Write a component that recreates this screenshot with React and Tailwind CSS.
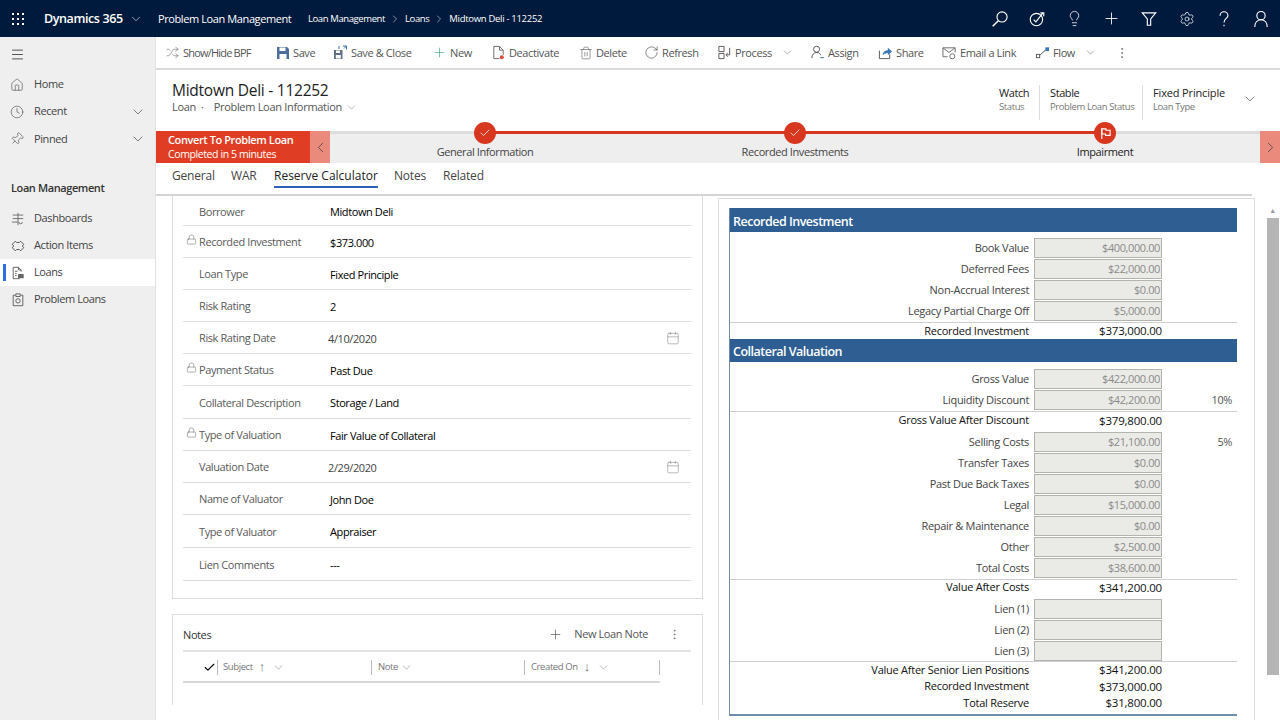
import {
  ChevronDown,
  ChevronLeft,
  ChevronRight,
  Check,
  Clock,
  Home,
  Lightbulb,
  Lock,
  Menu,
  MoreVertical,
  Pin,
  Plus,
  Settings,
  Shuffle,
  RotateCw,
  Trash2,
  Calendar,
} from "lucide-react";

const Svg = ({ size = 16, className = "", children }) => (
  <svg width={size} height={size} viewBox="0 0 16 16" fill="none" stroke="currentColor" strokeWidth="1" className={className}>
    {children}
  </svg>
);

const Waffle = () => (
  <svg width="14" height="14" viewBox="0 0 14 14" fill="currentColor">
    {[2, 7, 12].map((y) => [2, 7, 12].map((x) => <rect key={`${x}-${y}`} x={x - 1} y={y - 1} width="2" height="2" />))}
  </svg>
);

const SearchIcon = () => (
  <Svg size={18}>
    <circle cx="9.800" cy="6.200" r="4.500" />
    <path d="M6.500 9.500L1.500 14.500" strokeWidth="1.300" />
  </Svg>
);
const GoalIcon = () => (
  <Svg size={18}>
    <circle cx="7.500" cy="8.500" r="5.500" />
    <path d="M5 8.500l2 2 6-7.500M11 2.500h3v3" />
  </Svg>
);
const FunnelIcon = () => (
  <Svg size={18}>
    <path d="M2 2.500h12L9.500 8v5.500h-3V8z" />
  </Svg>
);
const HelpIcon = () => (
  <Svg size={18}>
    <path d="M4.500 5a3.500 3.500 0 117 0c0 2.500-3.500 2.500-3.500 6" />
    <path d="M8 13.200v1.300" />
  </Svg>
);
const UserIcon = ({ size = 18 }) => (
  <Svg size={size}>
    <circle cx="8" cy="5" r="3.700" />
    <path d="M2.500 15c0-3.500 2-6.300 5.500-6.300s5.500 2.800 5.500 6.300" />
  </Svg>
);
const FlagIcon = () => (
  <svg width="13" height="13" viewBox="0 0 14 14" fill="none">
    <path d="M3 13V1.500" stroke="#fff" strokeWidth="1.200" />
    <path d="M3 2h4.500v1.500H12V9H7V7.500H3z" stroke="#fff" strokeWidth="1.200" />
  </svg>
);
const SaveIcon = () => (
  <svg width="14" height="14" viewBox="0 0 14 14">
    <path d="M1 1h10l2 2v10H1z" fill="#4d6d9a" />
    <rect x="3.500" y="1.500" width="6" height="3.500" fill="#fff" />
    <rect x="3.500" y="8" width="7" height="5" fill="#fff" />
  </svg>
);
const SaveCloseIcon = () => (
  <svg width="15" height="15" viewBox="0 0 15 15">
    <path d="M1 5h8.500v9H1z" fill="#5f6f86" />
    <rect x="3" y="5.500" width="4" height="2.500" fill="#fff" />
    <rect x="2.800" y="10" width="5" height="3.500" fill="#fff" />
    <path d="M6 1v3M10 1h3.500v3.500M11 3.500l2.500-2.500" stroke="#3b6ea8" fill="none" />
  </svg>
);
const DeactivateIcon = () => (
  <Svg size={15} className="text-[#666]">
    <path d="M3 14.500V1.500h6l4 4v5M9 1.500v4h4M3 14.500h6" />
    <circle cx="11.500" cy="13" r="2.200" fill="#d9503f" stroke="none" />
  </Svg>
);
const ProcessIcon = () => (
  <Svg size={15} className="text-[#555]">
    <path d="M2 1.500h5.500v5.500H2zM2 9h5.500v5.500H2zM13.500 3v7.500H10M11.500 8.500l-2 2 2 2" />
  </Svg>
);
const AssignIcon = () => (
  <Svg size={15} className="text-[#555]">
    <circle cx="7" cy="4.500" r="3.200" />
    <path d="M2 14c0-3.500 2-6 5-6s4 1.500 4.500 3" />
    <path d="M11 13.500h4" stroke="#3b6ea8" />
  </Svg>
);
const ShareIcon = () => (
  <svg width="15" height="15" viewBox="0 0 16 16" fill="none">
    <path d="M1.500 6v8.500h11V10" stroke="#555" />
    <path d="M5 11c0-4 3-5.500 5.500-5.500V3L15 7l-4.500 4V8.500C8 8.500 6 9.500 5 11z" fill="#3b78b8" />
  </svg>
);
const EmailIcon = () => (
  <Svg size={15} className="text-[#666]">
    <path d="M6 12.500H1V3h13v5M1 3l6.500 5L14 3" />
    <circle cx="11" cy="12" r="2.700" />
  </Svg>
);
const FlowIcon = () => (
  <svg width="15" height="15" viewBox="0 0 16 16" fill="none">
    <rect x="1.500" y="10" width="3.500" height="3.500" stroke="#555" />
    <path d="M5 11L11 5.500" stroke="#555" />
    <rect x="11" y="2.500" width="4" height="4" fill="#3b78b8" />
  </svg>
);
const DashIcon = () => (
  <Svg size={14} className="text-[#666]">
    <path d="M8 1v14M2 3.500h12M2 7.500h12M1 11.500h7M9 11.500a2 2 0 004 0" />
  </Svg>
);
const PuzzleIcon = () => (
  <Svg size={14} className="text-[#444]">
    <path d="M5 2.500l1.500 1.500h3L11 2.500 14.500 6 13 8l1.500 2-3.500 3.500L9.500 12h-3L5 13.500 1.500 10 3 8 1.500 6z" />
  </Svg>
);
const LoanIcon = () => (
  <Svg size={14} className="text-[#555]">
    <path d="M10 14.500H2.500v-13h6l3 3v2M8.500 1.500v3h3M4.500 6h3M4.500 8.500h2M4.500 11h2" />
    <rect x="8" y="9" width="6.500" height="5" rx="1" fill="#666" stroke="none" />
  </Svg>
);
const ClipIcon = () => (
  <Svg size={14} className="text-[#555]">
    <path d="M5 2.500H2.500v12h11v-12H11M5.500 1h5v3h-5z" />
    <circle cx="8" cy="9" r="2.500" />
  </Svg>
);

const tools = [
  { icon: <Shuffle size={13} strokeWidth={1} className="text-[#555]" />, label: "Show/Hide BPF", w: "w-[110px]", track: "tracking-[-0.8px]" },
  { icon: <SaveIcon />, label: "Save", w: "w-[58px]" },
  { icon: <SaveCloseIcon />, label: "Save & Close", w: "w-[99px]" },
  { icon: <Plus size={15} strokeWidth={1} className="text-[#2f9e6e]" />, label: "New", w: "w-[59px]" },
  { icon: <DeactivateIcon />, label: "Deactivate", w: "w-[87px]" },
  { icon: <Trash2 size={14} strokeWidth={1} className="text-[#555]" />, label: "Delete", w: "w-[66px]" },
  { icon: <RotateCw size={15} strokeWidth={1} className="text-[#444]" />, label: "Refresh", w: "w-[73px]" },
  { icon: <ProcessIcon />, label: "Process", w: "w-[93px]", caret: true },
  { icon: <AssignIcon />, label: "Assign", w: "w-[68px]" },
  { icon: <ShareIcon />, label: "Share", w: "w-[64px]" },
  { icon: <EmailIcon />, label: "Email a Link", w: "w-[93px]" },
  { icon: <FlowIcon />, label: "Flow", w: "w-[80px]", caret: true },
];

const fields = [
  { label: "Borrower", value: "Midtown Deli", h: "h-[29px]" },
  { label: "Recorded Investment", value: "$373.000", lock: true, h: "h-[32px]" },
  { label: "Loan Type", value: "Fixed Principle", h: "h-[32px]" },
  { label: "Risk Rating", value: "2", h: "h-[32px]" },
  { label: "Risk Rating Date", value: "4/10/2020", date: true, h: "h-[32px]" },
  { label: "Payment Status", value: "Past Due", lock: true, h: "h-[32px]" },
  { label: "Collateral Description", value: "Storage / Land", h: "h-[33px]" },
  { label: "Type of Valuation", value: "Fair Value of Collateral", lock: true, h: "h-[32px]" },
  { label: "Valuation Date", value: "2/29/2020", date: true, h: "h-[32px]" },
  { label: "Name of Valuator", value: "John Doe", h: "h-[32px]" },
  { label: "Type of Valuator", value: "Appraiser", h: "h-[33px]" },
  { label: "Lien Comments", value: "---", h: "h-[33px]" },
];

function Field({ f }) {
  return (
    <div className={`${f.h} flex items-center border-b border-[#dcdcdc] relative`}>
      {f.lock && <Lock size={11} strokeWidth={1} className="absolute left-[3px] top-[8px] text-[#555]" />}
      <div className="w-[147px] pl-[16px] mt-[2px] text-[#5a5a5a]">{f.label}</div>
      <div className={f.date ? "flex-1 mt-[3px] text-[#444] -ml-[2px]" : "flex-1 mt-[3px] text-black"}>{f.value}</div>
      {f.date && <Calendar size={14} strokeWidth={1} className="mr-[11px] text-[#888]" />}
    </div>
  );
}

function InputRow({ label, value, pct }) {
  return (
    <div className="h-[21px] flex items-start">
      <div className="w-[299px] text-right text-[#444] leading-[20px] tracking-[-0.3px]">{label}</div>
      <div className="ml-[5px] w-[128px] h-[20px] bg-[#eaeae6] border border-[#b4b4ae] text-right pr-[1px] text-[#8a8a8a] leading-[18px]">
        {value}
      </div>
      {pct && <div className="w-[70px] text-right text-[#555] leading-[20px]">{pct}</div>}
    </div>
  );
}

function SumRow({ label, value, h = "h-[17px]" }) {
  return (
    <div className={`${h} flex items-center text-[#111] font-medium`}>
      <div className="w-[299px] text-right tracking-[-0.25px]">{label}</div>
      <div className="ml-[5px] w-[128px] text-right text-[11.5px] tracking-[-0.2px]">{value}</div>
    </div>
  );
}

const Band = ({ title, h }) => (
  <div className={`${h} bg-[#2f5f92] text-white font-semibold text-[12.5px] tracking-[-0.5px] pl-[3px] pt-[4px] flex items-center`}>{title}</div>
);

export default function App() {
  return (
    <div className="w-[1280px] h-[720px] overflow-hidden flex flex-col bg-white text-[11px] text-[#333] font-['Open_Sans','Noto_Sans',sans-serif] tracking-[-0.4px]">
      {/* top bar */}
      <div className="h-[37px] bg-[#001a3d] text-white flex items-center shrink-0">
        <div className="w-[36px] flex justify-center"><Waffle /></div>
        <span className="ml-[8px] mt-[2px] w-[80px] text-[12.5px] font-semibold whitespace-nowrap">Dynamics 365</span>
        <ChevronDown size={14} strokeWidth={1} className="ml-[5px]" />
        <span className="ml-[15px] mt-[2px] w-[136px] whitespace-nowrap">Problem Loan Management</span>
        <span className="ml-[14px] mt-[2px] text-[9.5px] whitespace-nowrap">Loan Management</span>
        <ChevronRight size={12} strokeWidth={1} className="mx-[4px]" />
        <span className="mt-[2px] text-[9.5px]">Loans</span>
        <ChevronRight size={12} strokeWidth={1} className="mx-[4px]" />
        <span className="mt-[2px] text-[9.5px] tracking-[-0.3px] whitespace-nowrap">Midtown Deli - 112252</span>
        <div className="ml-auto flex items-center">
          <div className="w-[37.400px] flex justify-center"><SearchIcon /></div>
          <div className="w-[37.400px] flex justify-center"><GoalIcon /></div>
          <div className="w-[37.400px] flex justify-center"><Lightbulb size={17} strokeWidth={1.1} /></div>
          <div className="w-[37.400px] flex justify-center"><Plus size={19} strokeWidth={1.1} /></div>
          <div className="w-[37.400px] flex justify-center"><FunnelIcon /></div>
          <div className="w-[37.400px] flex justify-center"><Settings size={16} strokeWidth={1.1} /></div>
          <div className="w-[37.400px] flex justify-center"><HelpIcon /></div>
          <div className="w-[37.400px] flex justify-center"><UserIcon /></div>
        </div>
      </div>

      <div className="flex-1 flex min-h-0">
        {/* sidebar */}
        <div className="w-[156px] shrink-0 bg-[#efefef] border-r border-[#e2e2e2] text-[#444]">
          <div className="h-[34px] pl-[10px] flex items-center"><Menu size={15} strokeWidth={1.2} className="text-[#222]" /></div>
          <div className="h-[27px] flex items-center pl-[10px]"><Home size={14} strokeWidth={1} /><span className="ml-[10px]">Home</span></div>
          <div className="h-[27px] flex items-center pl-[10px]"><Clock size={14} strokeWidth={1} /><span className="ml-[10px]">Recent</span><ChevronDown size={16} strokeWidth={1} className="ml-auto mr-[9px]" /></div>
          <div className="h-[28px] flex items-center pl-[10px]"><Pin size={14} strokeWidth={1} className="rotate-45" /><span className="ml-[10px]">Pinned</span><ChevronDown size={16} strokeWidth={1} className="ml-auto mr-[9px]" /></div>
          <div className="mt-[21px] h-[28px] pl-[11px] flex items-center font-semibold text-[#333]">Loan Management</div>
          <div className="mt-[3px] h-[27px] flex items-center pl-[11px]"><DashIcon /><span className="ml-[9px]">Dashboards</span></div>
          <div className="h-[27px] flex items-center pl-[11px]"><PuzzleIcon /><span className="ml-[9px]">Action Items</span></div>
          <div className="relative h-[27px] flex items-center pl-[11px] bg-white">
            <div className="absolute left-[3px] top-[5px] w-[3px] h-[17px] bg-[#2b6fe0]" />
            <LoanIcon /><span className="ml-[9px]">Loans</span>
          </div>
          <div className="h-[27px] flex items-center pl-[11px]"><ClipIcon /><span className="ml-[9px]">Problem Loans</span></div>
        </div>

        <div className="flex-1 flex flex-col min-w-0">
          {/* command bar */}
          <div className="h-[33px] shrink-0 border-b-2 border-[#dadada] flex items-center pl-[9px] text-[#555]">
            {tools.map((t) => (
              <div key={t.label} className={`${t.w} flex items-center whitespace-nowrap`}>
                <div className="w-[15px] flex justify-center shrink-0">{t.icon}</div>
                <span className={`ml-[3px] mt-[1px] ${t.track || ""}`}>{t.label}</span>
                {t.caret && <ChevronDown size={13} strokeWidth={1} className="ml-[9px] text-[#666]" />}
              </div>
            ))}
            <MoreVertical size={14} strokeWidth={1.2} className="text-[#666]" />
          </div>

          {/* record title */}
          <div className="h-[61px] shrink-0 flex pl-[16px] pr-[22px]">
            <div>
              <div className="mt-[9px] text-[15.5px] leading-[22px] font-medium text-[#222] tracking-[-0.25px]">Midtown Deli - 112252</div>
              <div className="flex items-center text-[#555] -mt-[2px] tracking-[-0.3px]">
                Loan<span className="mx-[5px]">·</span><span className="ml-[5px]">Problem Loan Information</span>
                <ChevronDown size={13} strokeWidth={1} className="ml-[3px] text-[#888]" />
              </div>
            </div>
            <div className="ml-auto mt-[15px] flex h-[35px] leading-[13px]">
              <div className="w-[41px] border-r border-[#dddddd]"><div className="text-[#222] leading-[15px]">Watch</div><div className="text-[9.5px] text-[#777]">Status</div></div>
              <div className="pl-[10px] w-[103px] border-r border-[#dddddd]"><div className="text-[#222] font-medium leading-[15px]">Stable</div><div className="text-[9.5px] text-[#777] whitespace-nowrap">Problem Loan Status</div></div>
              <div className="pl-[10px] w-[99px]"><div className="text-[#222] leading-[15px] tracking-[-0.15px] whitespace-nowrap">Fixed Principle</div><div className="text-[9.5px] text-[#777]">Loan Type</div></div>
              <ChevronDown size={16} strokeWidth={1} className="mt-[6px] text-[#555]" />
            </div>
          </div>

          {/* process bar */}
          <div className="relative h-[32px] shrink-0 bg-[#eeeeee] flex">
            <div className="w-[154px] bg-[#e03e24] text-white pl-[12px] pt-[2px] leading-[14px] text-[10.5px]">
              <div className="font-semibold text-[11px] whitespace-nowrap">Convert To Problem Loan</div>
              <div className="whitespace-nowrap">Completed in 5 minutes</div>
            </div>
            <div className="w-[20px] bg-[#ea8a7c] flex items-center justify-center"><ChevronLeft size={17} strokeWidth={1} className="text-[#333]" /></div>
            <div className="flex-1 flex items-end pb-[3px] text-[#444]">
              <div className="w-[310px] text-center">General Information</div>
              <div className="w-[310px] text-center">Recorded Investments</div>
              <div className="w-[310px] text-center text-[#222] font-medium">Impairment</div>
            </div>
            <div className="w-[20px] bg-[#ea8a7c] flex items-center justify-center"><ChevronRight size={17} strokeWidth={1} className="text-[#333]" /></div>

            <div className="absolute left-[174px] right-[20px] top-0 h-[3px] bg-[#dddddd]" />
            <div className="absolute left-[329px] w-[620px] top-0 h-[3px] bg-[#d8371f]" />
            <div className="absolute left-[318px] -top-[9px] w-[22px] h-[22px] rounded-full bg-[#d8371f] flex items-center justify-center"><Check size={12} strokeWidth={1.5} className="text-white" /></div>
            <div className="absolute left-[628px] -top-[9px] w-[22px] h-[22px] rounded-full bg-[#d8371f] flex items-center justify-center"><Check size={12} strokeWidth={1.5} className="text-white" /></div>
            <div className="absolute left-[938px] -top-[9px] w-[22px] h-[22px] rounded-full bg-[#d8371f] flex items-center justify-center"><FlagIcon /></div>
          </div>

          {/* tabs */}
          <div className="h-[33px] shrink-0 mr-[28px] border-b-2 border-[#d4d4d4] flex pl-[16px] text-[12px] tracking-[-0.2px] text-[#444]">
            <div className="mt-[4px] w-[59px]">General</div>
            <div className="mt-[4px] w-[43px]">WAR</div>
            <div className="w-[104px] h-[25px] pt-[4px] border-b-2 border-[#2b5fb8] text-[#222] font-medium tracking-normal whitespace-nowrap">Reserve Calculator</div>
            <div className="mt-[4px] ml-[16px] w-[49px]">Notes</div>
            <div className="mt-[4px]">Related</div>
          </div>

          {/* form */}
          <div className="flex-1 min-h-0 overflow-hidden flex pl-[16px]">
            <div className="w-[531px] shrink-0">
              <div className="h-[403px] border border-t-0 border-[#dcdcdc] pl-[10px] pr-[11px] pt-[1px]">
                {fields.map((f) => <Field key={f.label} f={f} />)}
              </div>
              <div className="mt-[15px] h-[91px] border border-b-0 border-[#dcdcdc] pl-[10px] pr-[11px]">
                <div className="h-[37px] pt-[3px] border-b-2 border-[#e4e4e4] flex items-center">
                  <span className="text-[#333] mt-[2px]">Notes</span>
                  <Plus size={15} strokeWidth={1} className="ml-auto text-[#444]" />
                  <span className="ml-[11px] text-[#555]">New Loan Note</span>
                  <MoreVertical size={13} strokeWidth={1.2} className="ml-[20px] mr-[10px] text-[#666]" />
                </div>
                <div className="w-[477px] h-[31px] pt-[1px] border-b-2 border-[#d8d8d8] flex items-center text-[9.5px] text-[#777]">
                  <Check size={13} strokeWidth={2} className="ml-[20px] text-black" />
                  <div className="ml-[1px] w-[154px] h-[15px] border-l border-[#bbbbbb] pl-[5px] flex items-center">Subject<span className="ml-[6px] text-[13px]">↑</span><ChevronDown size={13} strokeWidth={1} className="ml-[7px]" /></div>
                  <div className="w-[153px] h-[15px] border-l border-[#bbbbbb] pl-[6px] flex items-center">Note<ChevronDown size={13} strokeWidth={1} className="ml-[2px]" /></div>
                  <div className="w-[136px] h-[15px] border-x border-[#bbbbbb] pl-[6px] flex items-center">Created On<span className="ml-[6px] text-[13px]">↓</span><ChevronDown size={13} strokeWidth={1} className="ml-[7px]" /></div>
                </div>
              </div>
            </div>

            <div className="ml-[15px] w-[537px] shrink-0 h-[540px] mt-[2px] border border-b-0 border-[#dcdcdc] pl-[10px] pt-[9px]">
              <div className="w-[508px] h-[508px] border-l border-b-2 border-[#6f8cab]">
                <Band title="Recorded Investment" h="h-[24px]" />
                <div className="pt-[6px]">
                  <InputRow label="Book Value" value="$400,000.00" />
                  <InputRow label="Deferred Fees" value="$22,000.00" />
                  <InputRow label="Non-Accrual Interest" value="$0.00" />
                  <InputRow label="Legacy Partial Charge Off" value="$5,000.00" />
                </div>
                <div className="border-t border-[#cfcfcf]"><SumRow label="Recorded Investment" value="$373,000.00" h="h-[16px]" /></div>
                <Band title="Collateral Valuation" h="h-[23px]" />
                <div className="pt-[7px]">
                  <InputRow label="Gross Value" value="$422,000.00" />
                  <InputRow label="Liquidity Discount" value="$42,200.00" pct="10%" />
                </div>
                <div className="border-t border-[#cfcfcf] pb-[3px]"><SumRow label="Gross Value After Discount" value="$379,800.00" h="h-[17px]" /></div>
                <InputRow label="Selling Costs" value="$21,100.00" pct="5%" />
                <InputRow label="Transfer Taxes" value="$0.00" />
                <InputRow label="Past Due Back Taxes" value="$0.00" />
                <InputRow label="Legal" value="$15,000.00" />
                <InputRow label="Repair & Maintenance" value="$0.00" />
                <InputRow label="Other" value="$2,500.00" />
                <InputRow label="Total Costs" value="$38,600.00" />
                <div className="border-t border-[#cfcfcf] pb-[4px]"><SumRow label="Value After Costs" value="$341,200.00" h="h-[15px]" /></div>
                <InputRow label="Lien (1)" value="" />
                <InputRow label="Lien (2)" value="" />
                <InputRow label="Lien (3)" value="" />
                <div className="border-t border-[#cfcfcf] -mt-[1px]">
                  <SumRow label="Value After Senior Lien Positions" value="$341,200.00" h="h-[16px]" />
                  <SumRow label="Recorded Investment" value="$373,000.00" h="h-[17px]" />
                  <SumRow label="Total Reserve" value="$31,800.00" h="h-[16px]" />
                </div>
              </div>
            </div>

            {/* scrollbar */}
            <div className="ml-[11px] w-[13px] mt-[4px] flex flex-col items-center">
              <div className="h-[18px] pt-[5px] flex items-center text-[7px] text-[#999]">▲</div>
              <div className="w-[12px] h-[457px] bg-[#b5b5b5]" />
            </div>
          </div>
        </div>
      </div>
    </div>
  );
}
